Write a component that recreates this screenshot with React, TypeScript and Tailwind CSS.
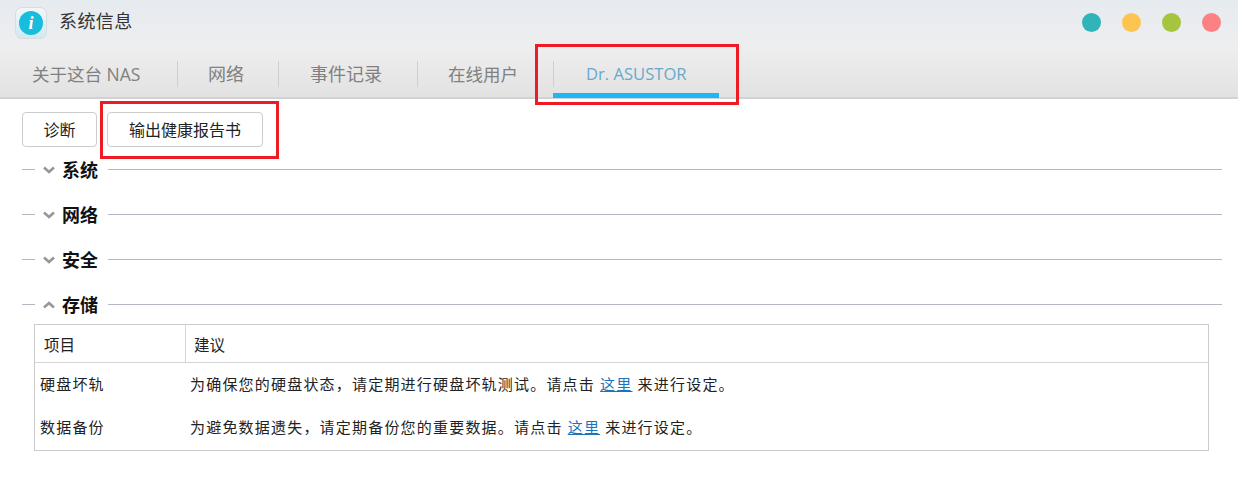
const cjk = "font-['Open_Sans','Noto_Sans_CJK_SC',sans-serif]";

function Chevron({ up }: { up?: boolean }) {
  return (
    <svg width="12" height="8" viewBox="0 0 12 8" className="block">
      <path d={up ? "M1 6.5 L6 2 L11 6.5" : "M1 1.5 L6 6 L11 1.5"} fill="none" stroke="#979797" strokeWidth="2.6" />
    </svg>
  );
}

function Section({ title, up, className }: { title: string; up?: boolean; className: string }) {
  return (
    <div className={`flex h-[24px] items-center ${className}`}>
      <div className="mb-[2px] h-px w-[13px] bg-[#b4b6c4]" />
      <div className="ml-[8px] w-[12px]"><Chevron up={up} /></div>
      <div className="ml-[7px] text-[18px] font-bold leading-[24px] text-[#111]">{title}</div>
      <div className="mb-[2px] ml-[10px] h-px flex-1 bg-[#b4b6c4]" />
    </div>
  );
}

function Tab({ label, className }: { label: string; className: string }) {
  return <div className={`flex h-[26px] items-center leading-[26px] text-[#808080] ${className}`}>{label}</div>;
}

export default function App() {
  return (
    <div className={`relative h-[496px] w-[1238px] overflow-hidden bg-white ${cjk}`}>
      <header className="h-[99px] border-b-2 border-[#d2d2d4] bg-gradient-to-b from-[#e6ebef] via-[#eeeeef] to-[#e2e2e3]">
        <div className="flex h-[46px] items-center pl-[15px] pr-[17px]">
          <div className="flex h-[32px] w-[32px] items-center justify-center rounded-[7px] border border-[#d8dde0] bg-gradient-to-b from-[#f2f7f8] to-[#cfeaf3]">
            <div className="flex h-[24px] w-[24px] items-center justify-center rounded-full bg-[#18bcdc] font-['Liberation_Serif',serif] text-[18px] font-bold italic leading-none text-white">i</div>
          </div>
          <div className="mb-[3px] ml-[12px] text-[18px] tracking-[0.4px] text-[#333]">系统信息</div>
          <div className="mb-[2px] ml-auto flex gap-[21px]">
            <div className="h-[19px] w-[19px] rounded-full bg-[#2fb4ba]" />
            <div className="h-[19px] w-[19px] rounded-full bg-[#fdc44f]" />
            <div className="h-[19px] w-[19px] rounded-full bg-[#a6c43e]" />
            <div className="h-[19px] w-[19px] rounded-full bg-[#fd8082]" />
          </div>
        </div>
        <div className="flex h-[51px] pt-[15px]">
          <Tab label="关于这台 NAS" className="w-[177px] shrink-0 pl-[32px] text-[17.5px]" />
          <Tab label="网络" className="w-[101px] shrink-0 border-l border-[#cfcfcf] pl-[30px] text-[18px]" />
          <Tab label="事件记录" className="w-[139px] shrink-0 border-l border-[#cfcfcf] pl-[31px] text-[18px]" />
          <Tab label="在线用户" className="w-[136px] shrink-0 border-l border-[#cfcfcf] pl-[30px] text-[17.5px]" />
          <div className="relative w-[166px]">
            <Tab label="Dr. ASUSTOR" className="border-l border-[#cfcfcf] pl-[32px] text-[16.6px] !text-[#67a9cc]" />
            <div className="absolute left-0 top-[32px] h-[5px] w-[166px] bg-[#1cb8f6]" />
          </div>
        </div>
      </header>

      <div className="flex gap-[10px] pl-[22px] pt-[13px]">
        <button className="h-[35px] w-[75px] rounded-[4px] border border-[#cccccc] bg-white text-[16px] text-[#222]">诊断</button>
        <button className="h-[35px] w-[156px] rounded-[4px] border border-[#cccccc] bg-white text-[16px] text-[#222]">输出健康报告书</button>
      </div>

      <div className="pl-[22px] pr-[16px]">
        <Section title="系统" className="mt-[11px]" />
        <Section title="网络" className="mt-[21px]" />
        <Section title="安全" className="mt-[21px]" />
        <Section title="存储" up className="mt-[21px]" />
        <div className="ml-[12px] mt-[7px] h-[127px] w-[1175px] border border-[#cccccc] text-[15px] text-[#222]">
          <div className="flex h-[38px] border-b border-[#d5d5d5]">
            <div className="flex w-[151px] items-center border-r border-[#d5d5d5] pl-[9px] pt-[4px] text-[15.5px]">项目</div>
            <div className="flex items-center pl-[8px] pt-[4px] text-[15.5px]">建议</div>
          </div>
          <div className="flex h-[43px] items-center">
            <div className="w-[155px] pl-[5px] tracking-[1.2px]">硬盘坏轨</div>
            <div className="tracking-[1.2px]">为确保您的硬盘状态，请定期进行硬盘坏轨测试。请点击 <span className="text-[#1c75bc] underline">这里</span> 来进行设定。</div>
          </div>
          <div className="flex h-[41px] items-center pt-[2px]">
            <div className="w-[155px] pl-[5px] tracking-[1.2px]">数据备份</div>
            <div className="tracking-[1.2px]">为避免数据遗失，请定期备份您的重要数据。请点击 <span className="text-[#1c75bc] underline">这里</span> 来进行设定。</div>
          </div>
        </div>
      </div>

      <div className="absolute left-[535px] top-[44px] h-[61px] w-[204px] border-[3px] border-[#ed1c24]" />
      <div className="absolute left-[100px] top-[101px] h-[58px] w-[179px] border-[3px] border-[#ed1c24]" />
    </div>
  );
}
